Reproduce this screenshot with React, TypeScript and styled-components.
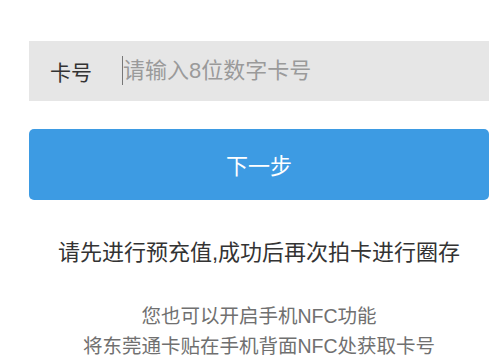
import styled, { createGlobalStyle } from "styled-components"

const Global = createGlobalStyle`
  html, body {
    margin: 0;
    padding: 0;
    background: #ffffff;
  }
  body {
    font-family: "Liberation Sans", "Noto Sans CJK SC", sans-serif;
  }
`

export default function App() {
  return (
    <>
      <Global />
      <Page>
        <Field>
          <Label>卡号</Label>
          <Cursor />
          <Input placeholder="请输入8位数字卡号" />
        </Field>
        <NextButton>下一步</NextButton>
        <Notice>请先进行预充值,成功后再次拍卡进行圈存</Notice>
        <Hint>
          <HintLine>您也可以开启手机NFC功能</HintLine>
          <HintLine>将东莞通卡贴在手机背面NFC处获取卡号</HintLine>
        </Hint>
      </Page>
    </>
  )
}

const Page = styled.div`
  display: flex;
  flex-direction: column;
  padding: 41px 11px 0 29px;
  height: 361px;
  box-sizing: border-box;
  overflow: hidden;
`

const Field = styled.div`
  display: flex;
  align-items: center;
  height: 60px;
  background: #e6e6e6;
  padding-left: 21px;
`

const Label = styled.span`
  font-size: 21px;
  color: #333333;
  width: 72px;
`

const Cursor = styled.span`
  width: 1px;
  height: 29px;
  background: #777777;
`

const Input = styled.input`
  flex: 1;
  min-width: 0;
  border: none;
  outline: none;
  background: transparent;
  font-family: inherit;
  font-size: 22px;
  color: #333333;
  padding: 0;
  &::placeholder {
    color: #9a9a9a;
  }
`

const NextButton = styled.button`
  margin-top: 28px;
  height: 72px;
  border: none;
  border-radius: 5px;
  background: #3d9be3;
  color: #ffffff;
  font-family: inherit;
  font-size: 22px;
`

const Notice = styled.p`
  margin: 39px 0 0;
  text-align: center;
  font-size: 22px;
  line-height: 28px;
  color: #333333;
`

const Hint = styled.div`
  display: flex;
  flex-direction: column;
  align-items: center;
  margin: 34px 0 0;
`

const HintLine = styled.span`
  font-size: 19.5px;
  line-height: 30px;
  color: #707070;
`
